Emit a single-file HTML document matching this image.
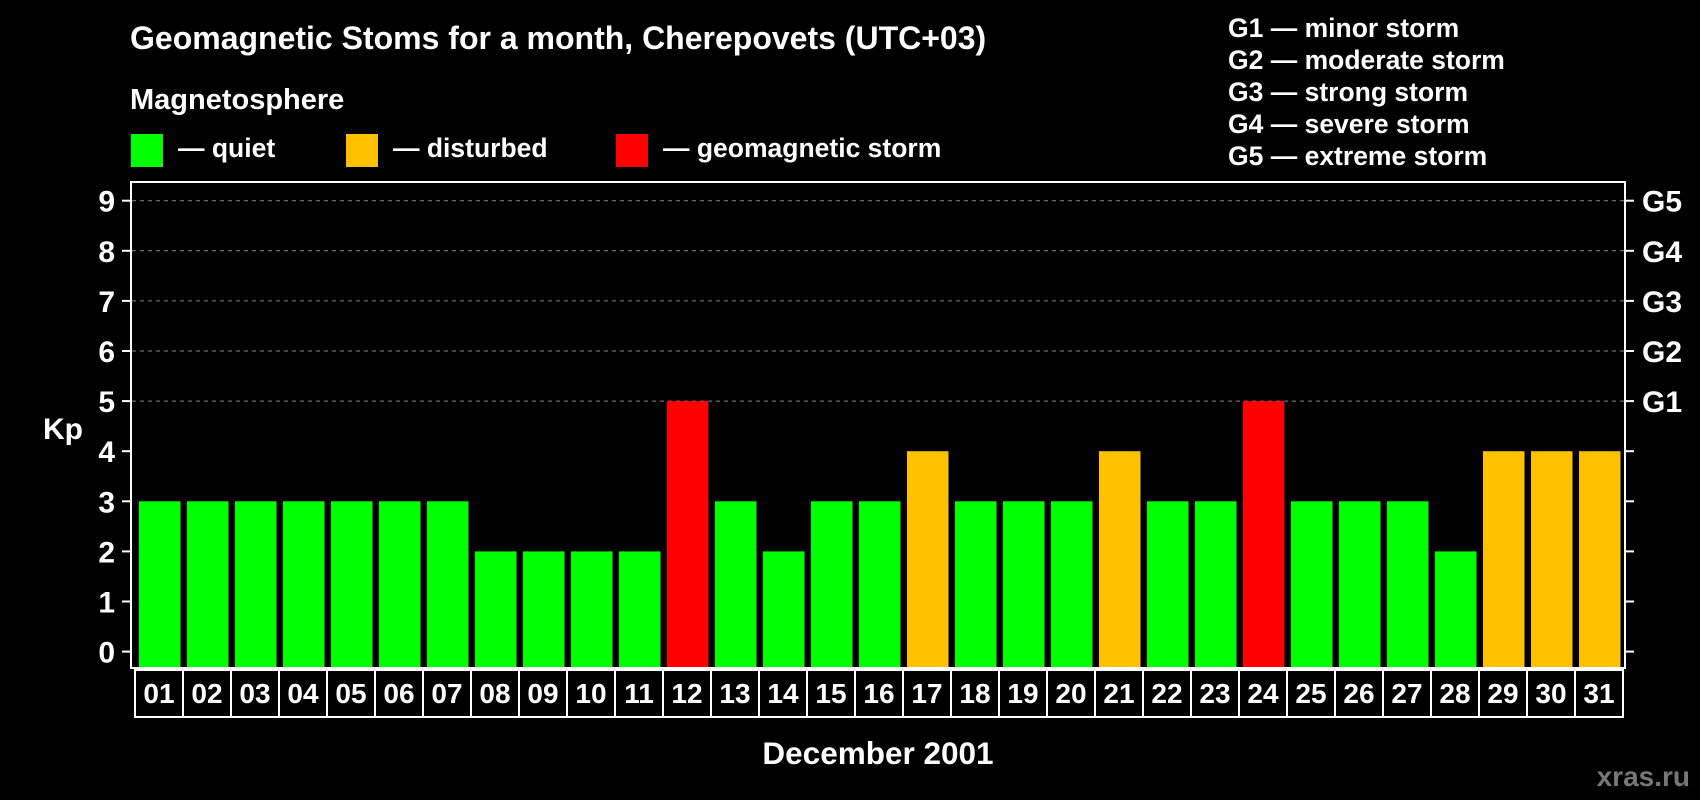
<!DOCTYPE html>
<html><head><meta charset="utf-8"><style>
html,body{margin:0;padding:0;background:#000;width:1700px;height:800px;overflow:hidden}
svg{display:block}
text{font-family:"Liberation Sans",sans-serif;font-weight:bold;fill:#fff}
</style></head><body>
<svg width="1700" height="800" viewBox="0 0 1700 800" xmlns="http://www.w3.org/2000/svg">
<rect width="1700" height="800" fill="#000"/>
<text x="130" y="49" font-size="32">Geomagnetic Stoms for a month, Cherepovets (UTC+03)</text>
<text x="130" y="109" font-size="29">Magnetosphere</text>
<rect x="131" y="134" width="32" height="33" fill="#00ff00"/>
<text x="178" y="157" font-size="26.5">— quiet</text>
<rect x="346" y="134" width="32" height="33" fill="#ffc000"/>
<text x="393" y="157" font-size="26.5">— disturbed</text>
<rect x="616" y="134" width="32" height="33" fill="#ff0000"/>
<text x="663" y="157" font-size="26.5">— geomagnetic storm</text>
<g font-size="26.5">
<text x="1228" y="37">G1 — minor storm</text>
<text x="1228" y="69">G2 — moderate storm</text>
<text x="1228" y="101">G3 — strong storm</text>
<text x="1228" y="133">G4 — severe storm</text>
<text x="1228" y="165">G5 — extreme storm</text>
</g>
<g id="grid" stroke="#888" stroke-width="1" stroke-dasharray="4,4"></g>
<g id="bars"></g>
<rect x="131" y="182" width="1494" height="486" fill="none" stroke="#fff" stroke-width="2"/>
<g id="ticks" stroke="#fff" stroke-width="2"></g>
<g id="ylab" font-size="30" text-anchor="end"></g>
<g id="glab" font-size="30"></g>
<text x="43" y="439" font-size="30">Kp</text>
<g id="days"></g>
<text x="878" y="764" font-size="31.5" text-anchor="middle">December 2001</text>
<text x="1690" y="786" font-size="28" text-anchor="end" style="fill:#777">xras.ru</text>
</svg>
<script>
var ns="http://www.w3.org/2000/svg";
function el(t,a,p,txt){var e=document.createElementNS(ns,t);for(var k in a)e.setAttribute(k,a[k]);if(txt!=null)e.textContent=txt;document.getElementById(p).appendChild(e);}
var d=[3,3,3,3,3,3,3,2,2,2,2,5,3,2,3,3,4,3,3,3,4,3,3,5,3,3,3,2,4,4,4];
var y0=651.6,s=50.1;
d.forEach(function(v,i){var c=v>=5?"#ff0000":v==4?"#ffc000":"#00ff00";var x=139+i*48;var top=y0-v*s;
el("rect",{x:x,y:top,width:41.5,height:668-top,fill:c},"bars");
el("rect",{x:135+i*48,y:670,width:48,height:47,fill:"none",stroke:"#fff","stroke-width":2},"days");
el("text",{x:159+i*48,y:703,"font-size":28,"text-anchor":"middle"},"days",(i<9?"0":"")+(i+1));
});
for(var k=0;k<=9;k++){var y=y0-k*s;
if(k>=5)el("line",{x1:132,x2:1624,y1:y,y2:y},"grid");
el("line",{x1:122,x2:131,y1:y,y2:y},"ticks");
el("line",{x1:1625,x2:1634,y1:y,y2:y},"ticks");
el("text",{x:115,y:y+11},"ylab",""+k);
if(k>=5)el("text",{x:1642,y:y+11},"glab","G"+(k-4));}
</script>
</body></html>
